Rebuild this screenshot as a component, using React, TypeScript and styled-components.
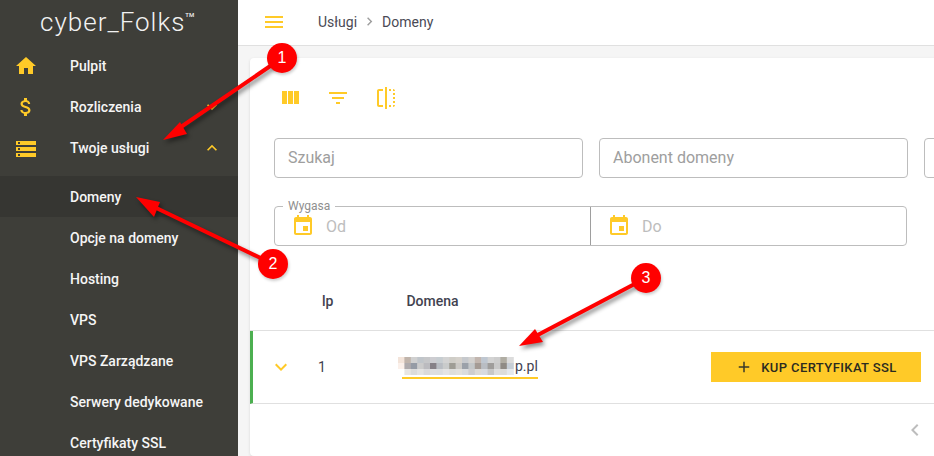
import React from 'react';
import styled, { createGlobalStyle } from 'styled-components';

const YELLOW = '#ffca28';

const GlobalStyle = createGlobalStyle`
  html, body {
    margin: 0;
    padding: 0;
    height: 100%;
    overflow: hidden;
    font-family: Roboto, "Liberation Sans", sans-serif;
  }
  * {
    box-sizing: border-box;
  }
`;

const paths = {
  home: 'M10 20v-6h4v6h5v-8h3L12 3 2 12h3v8z',
  dollar:
    'M11.8 10.9c-2.27-.59-3-1.2-3-2.15 0-1.09 1.01-1.85 2.7-1.85 1.78 0 2.44.85 2.5 2.1h2.21c-.07-1.72-1.12-3.3-3.21-3.81V3h-3v2.16c-1.94.42-3.5 1.68-3.5 3.61 0 2.31 1.91 3.46 4.7 4.13 2.5.6 3 1.48 3 2.41 0 .69-.49 1.79-2.7 1.79-2.06 0-2.87-.92-2.98-2.1h-2.2c.12 2.19 1.76 3.42 3.68 3.83V21h3v-2.15c1.95-.37 3.5-1.5 3.5-3.55 0-2.84-2.43-3.81-4.7-4.4z',
  dns: 'M2 5h20v4H2zM4 6v2h2V6zM2 11h20v4H2zM4 12v2h2v-2zM2 17h20v4H2zM4 18v2h2v-2z',
  menu: 'M3 18h18v-2H3v2zm0-5h18v-2H3v2zm0-7v2h18V6H3z',
  columns: 'M10 18h5V5h-5v13zm-6 0h5V5H4v13zM16 5v13h5V5h-5z',
  filter: 'M10 18h4v-2h-4v2zM3 6v2h18V6H3zm3 7h12v-2H6v2z',
  flip: 'M15 21h2v-2h-2v2zm4-12h2V7h-2v2zM3 5v14c0 1.1.9 2 2 2h4v-2H5V5h4V3H5c-1.1 0-2 .9-2 2zm16-2v2h2c0-1.1-.9-2-2-2zm-8 20h2V1h-2v22zm8-6h2v-2h-2v2zM15 5h2V3h-2v2zm4 8h2v-2h-2v2zm0 8c1.1 0 2-.9 2-2h-2v2z',
  event:
    'M17 12h-5v5h5v-5zM16 1v2H8V1H6v2H5c-1.11 0-1.99.9-1.99 2L3 19c0 1.1.89 2 2 2h14c1.1 0 2-.9 2-2V5c0-1.1-.9-2-2-2h-1V1h-2zm3 18H5V8h14v11z',
  expandMore: 'M16.59 8.59L12 13.17 7.41 8.59 6 10l6 6 6-6z',
  expandLess: 'M12 8l-6 6 1.41 1.41L12 10.83l4.59 4.58L18 14z',
  chevronLeft: 'M15.41 7.41L14 6l-6 6 6 6 1.41-1.41L10.83 12z',
  chevronRight: 'M10 6L8.59 7.41 13.17 12l-4.58 4.59L10 18l6-6z',
  plus: 'M19 13h-6v6h-2v-6H5v-2h6V5h2v6h6v2z',
};

type IconProps = {
  name: keyof typeof paths;
  size?: number;
  color?: string;
};
const Icon: React.FC<IconProps> = ({ name, size = 24, color = YELLOW }) => (
  <IconSvg viewBox="0 0 24 24" width={size} height={size} fill={color}>
    <path d={paths[name]} fillRule="evenodd" />
  </IconSvg>
);

const mainItems = [
  { label: 'Pulpit', icon: 'home' as const },
  { label: 'Rozliczenia', icon: 'dollar' as const, chevron: 'expandMore' as const },
  { label: 'Twoje usługi', icon: 'dns' as const, chevron: 'expandLess' as const },
];

const subItems = [
  'Domeny',
  'Opcje na domeny',
  'Hosting',
  'VPS',
  'VPS Zarządzane',
  'Serwery dedykowane',
  'Certyfikaty SSL',
];

// red arrows drawn over the page: shaft from the badge, head at the target
const arrows = [
  { x1: 282, y1: 58, x2: 175, y2: 131, head: '163,140 180,122 187,134' },
  { x1: 273, y1: 264, x2: 150, y2: 205, head: '136,197 160,202 154,217' },
  { x1: 646, y1: 278, x2: 532, y2: 338, head: '519,346 535,329 543,342' },
];

// pixelated part of the domain name, one array per row of the mosaic
const blurRows = [
  ['#f3e4da', '#c0b4ab', '#d0d0d0', '#c0c5ca', '#c6c7c9', '#cdcdd1', '#c7cdd1', '#d3d3d3', '#cfcdc7', '#d5d1cb', '#c6c9cd', '#d3d1cf', '#c2b6af', '#bfc7d1', '#d3d3d3', '#cdcdcd', '#b0ada3', '#dcdcdc'],
  ['#fbf0ea', '#afabad', '#959ba5', '#cbcbcb', '#bbbbbf', '#868187', '#b9bdc3', '#c9cbcb', '#9f9d95', '#cbc9c5', '#9ba1a9', '#c4c7c9', '#a59b95', '#b9bdc3', '#9f9d9b', '#c9c9c9', '#8f8b85', '#c6ced6'],
  ['#ffffff', '#e8e6e4', '#dcdcdc', '#e4e4e4', '#dadadc', '#dedee0', '#dcdee0', '#e4e4e4', '#dededc', '#e2e1de', '#dadcde', '#cecdd0', '#dcdad8', '#d8dade', '#c8c8c8', '#dedede', '#dcdcda', '#e4e8ec'],
];

const App: React.FC = () => {
  return (
    <Page>
      <GlobalStyle />
      <Sidebar>
        <Logo>
          cyber_Folks<sup>TM</sup>
        </Logo>
        <nav>
          {mainItems.map(item => (
            <NavItem key={item.label}>
              <Icon name={item.icon} />
              <NavLabel>{item.label}</NavLabel>
              {item.chevron ? <Icon name={item.chevron} size={20} /> : null}
            </NavItem>
          ))}
        </nav>
        <SubNav>
          {subItems.map((label, index) => (
            <SubItem key={label} $active={index === 0}>
              {label}
            </SubItem>
          ))}
        </SubNav>
      </Sidebar>

      <Main>
        <Topbar>
          <Icon name="menu" />
          <Breadcrumbs>
            <span>Usługi</span>
            <Icon name="chevronRight" size={17} color="#9e9e9e" />
            <span>Domeny</span>
          </Breadcrumbs>
        </Topbar>

        <Content>
          <Card>
            <Toolbar>
              <ToolButton>
                <Icon name="columns" />
              </ToolButton>
              <ToolButton>
                <Icon name="filter" />
              </ToolButton>
              <ToolButton>
                <Icon name="flip" />
              </ToolButton>
            </Toolbar>

            <Filters>
              <SearchBox>Szukaj</SearchBox>
              <SearchBox>Abonent domeny</SearchBox>
              <SearchBox />
            </Filters>

            <DateRange>
              <DateLegend>Wygasa</DateLegend>
              <DateField>
                <Icon name="event" />
                <DateHint>Od</DateHint>
              </DateField>
              <DateField>
                <Icon name="event" />
                <DateHint>Do</DateHint>
              </DateField>
            </DateRange>

            <TableHead>
              <span>lp</span>
              <span>Domena</span>
            </TableHead>

            <TableRow>
              <RowToggle>
                <Icon name="expandMore" />
              </RowToggle>
              <RowIndex>1</RowIndex>
              <DomainLink>
                <BlurSvg width="116" height="18" viewBox="0 0 116 18">
                  {blurRows.map((row, y) =>
                    row.map((color, x) => (
                      <rect key={`${y}_${x}`} x={x * 6.4} y={y * 6} width="7" height="6.5" fill={color} />
                    )),
                  )}
                </BlurSvg>
                p.pl
              </DomainLink>
              <BuyButton>
                <Icon name="plus" size={18} color="#3a3a2a" />
                Kup certyfikat SSL
              </BuyButton>
            </TableRow>

            <TableFooter>
              <Icon name="chevronLeft" color="#bdbdbd" />
            </TableFooter>
          </Card>
        </Content>
      </Main>

      <Annotations viewBox="0 0 934 456" width="934" height="456">
        {arrows.map(arrow => (
          <g key={arrow.head}>
            <line x1={arrow.x1} y1={arrow.y1} x2={arrow.x2} y2={arrow.y2} />
            <polygon points={arrow.head} />
          </g>
        ))}
      </Annotations>
      <Badge $x={282} $y={58}>1</Badge>
      <Badge $x={273} $y={264}>2</Badge>
      <Badge $x={646} $y={278}>3</Badge>
    </Page>
  );
};

export default App;

const IconSvg = styled.svg`
  display: block;
  flex: none;
`;

const Page = styled.div`
  position: relative;
  display: flex;
  width: 934px;
  height: 456px;
  overflow: hidden;
`;

const Sidebar = styled.aside`
  flex: none;
  width: 238px;
  height: 100%;
  overflow: hidden;
  background: #3e3e39;
  color: #f5f5f5;
  font-size: 14px;
  font-weight: 500;
`;

const Logo = styled.div`
  height: 45px;
  padding: 4px 0 0 40px;
  font-size: 26px;
  font-weight: 300;
  letter-spacing: 1px;
  line-height: 36px;
  color: #f2f2f2;

  sup {
    font-size: 6px;
    font-weight: 500;
    letter-spacing: 0;
    line-height: 0;
    vertical-align: 14px;
  }
`;

const NavItem = styled.div`
  display: flex;
  align-items: center;
  height: 41px;
  padding: 0 16px 0 14px;
`;

const NavLabel = styled.span`
  flex: 1;
  margin-left: 32px;
`;

const SubNav = styled.div`
  margin-top: 8px;
`;

const SubItem = styled.div<{ $active?: boolean }>`
  display: flex;
  align-items: center;
  height: 41px;
  padding-left: 70px;
  background: ${({ $active }) => ($active ? '#363632' : 'transparent')};
`;

const Main = styled.main`
  flex: 1;
  min-width: 0;
  display: flex;
  flex-direction: column;
  background: #f5f5f5;
`;

const Topbar = styled.header`
  flex: none;
  display: flex;
  align-items: center;
  height: 46px;
  padding-left: 24px;
  padding-bottom: 2px;
  background: #fff;
  border-bottom: 1px solid #e0e0e0;
`;

const Breadcrumbs = styled.div`
  display: flex;
  align-items: center;
  gap: 4px;
  margin-left: 32px;
  font-size: 14px;
  color: #4a4a55;
`;

const Content = styled.div`
  flex: 1;
  padding: 12px 0 0 12px;
`;

const Card = styled.section`
  width: 720px;
  height: 398px;
  background: #fff;
  border-radius: 4px;
  box-shadow: 0 1px 3px rgba(0, 0, 0, 0.12);
`;

const Toolbar = styled.div`
  display: flex;
  padding: 16px 16px 0;
`;

const ToolButton = styled.div`
  width: 48px;
  height: 48px;
  padding: 12px;
`;

const Filters = styled.div`
  display: flex;
  gap: 16px;
  padding: 16px 24px 0;
`;

const SearchBox = styled.div`
  flex: none;
  width: 309px;
  height: 40px;
  padding: 0 13px;
  line-height: 38px;
  font-size: 16px;
  color: #9e9e9e;
  border: 1px solid #bdbdbd;
  border-radius: 4px;
`;

const DateRange = styled.div`
  position: relative;
  display: flex;
  width: 633px;
  height: 40px;
  margin: 28px 0 0 24px;
  border: 1px solid #bdbdbd;
  border-radius: 4px;
`;

const DateLegend = styled.span`
  position: absolute;
  top: -8px;
  left: 8px;
  padding: 0 5px;
  font-size: 12px;
  line-height: 14px;
  color: #8f8f8f;
  background: #fff;
`;

const DateField = styled.div`
  flex: 1;
  display: flex;
  align-items: center;
  gap: 11px;
  padding-left: 16px;

  & + & {
    border-left: 1px solid #9e9e9e;
  }
`;

const DateHint = styled.span`
  font-size: 16px;
  color: #bdbdbd;
`;

const TableHead = styled.div`
  display: flex;
  align-items: center;
  gap: 73px;
  height: 61px;
  margin-top: 24px;
  padding: 2px 0 0 72px;
  font-size: 14px;
  font-weight: 500;
  color: #424250;
  border-bottom: 1px solid #e0e0e0;
`;

const TableRow = styled.div`
  display: flex;
  align-items: center;
  height: 73px;
  padding-right: 49px;
  font-size: 14px;
  color: #424250;
  border-left: 3px solid #4caf50;
  border-bottom: 1px solid #e0e0e0;
`;

const RowToggle = styled.div`
  margin-left: 16px;
`;

const RowIndex = styled.span`
  width: 84px;
  margin-left: 25px;
`;

const DomainLink = styled.span`
  display: flex;
  align-items: center;
  height: 24px;
  margin-right: auto;
  border-bottom: 2px solid ${YELLOW};
`;

const BlurSvg = styled.svg`
  display: block;
  margin-left: -4px;
  margin-right: 1px;
  filter: blur(0.4px);
`;

const BuyButton = styled.div`
  display: flex;
  align-items: center;
  justify-content: center;
  gap: 8px;
  width: 210px;
  height: 30px;
  font-size: 13px;
  font-weight: 500;
  letter-spacing: 0.4px;
  text-transform: uppercase;
  color: #2b2b20;
  background: ${YELLOW};
`;

const TableFooter = styled.div`
  display: flex;
  align-items: center;
  height: 52px;
  padding-left: 653px;
`;

const Annotations = styled.svg`
  position: absolute;
  top: 0;
  left: 0;
  fill: #f00;
  stroke-width: 0;
  filter: drop-shadow(2px 3px 2px rgba(0, 0, 0, 0.45));
  pointer-events: none;

  line {
    stroke: #f00;
    stroke-width: 4;
  }
`;

const Badge = styled.div<{ $x: number; $y: number }>`
  position: absolute;
  top: ${({ $y }) => $y - 15}px;
  left: ${({ $x }) => $x - 15}px;
  width: 30px;
  height: 30px;
  border-radius: 50%;
  font-family: "Liberation Sans", Arial, sans-serif;
  font-size: 16px;
  line-height: 30px;
  text-align: center;
  color: #fff;
  background: #f00;
  box-shadow: 1px 2px 3px rgba(0, 0, 0, 0.2);
`;
